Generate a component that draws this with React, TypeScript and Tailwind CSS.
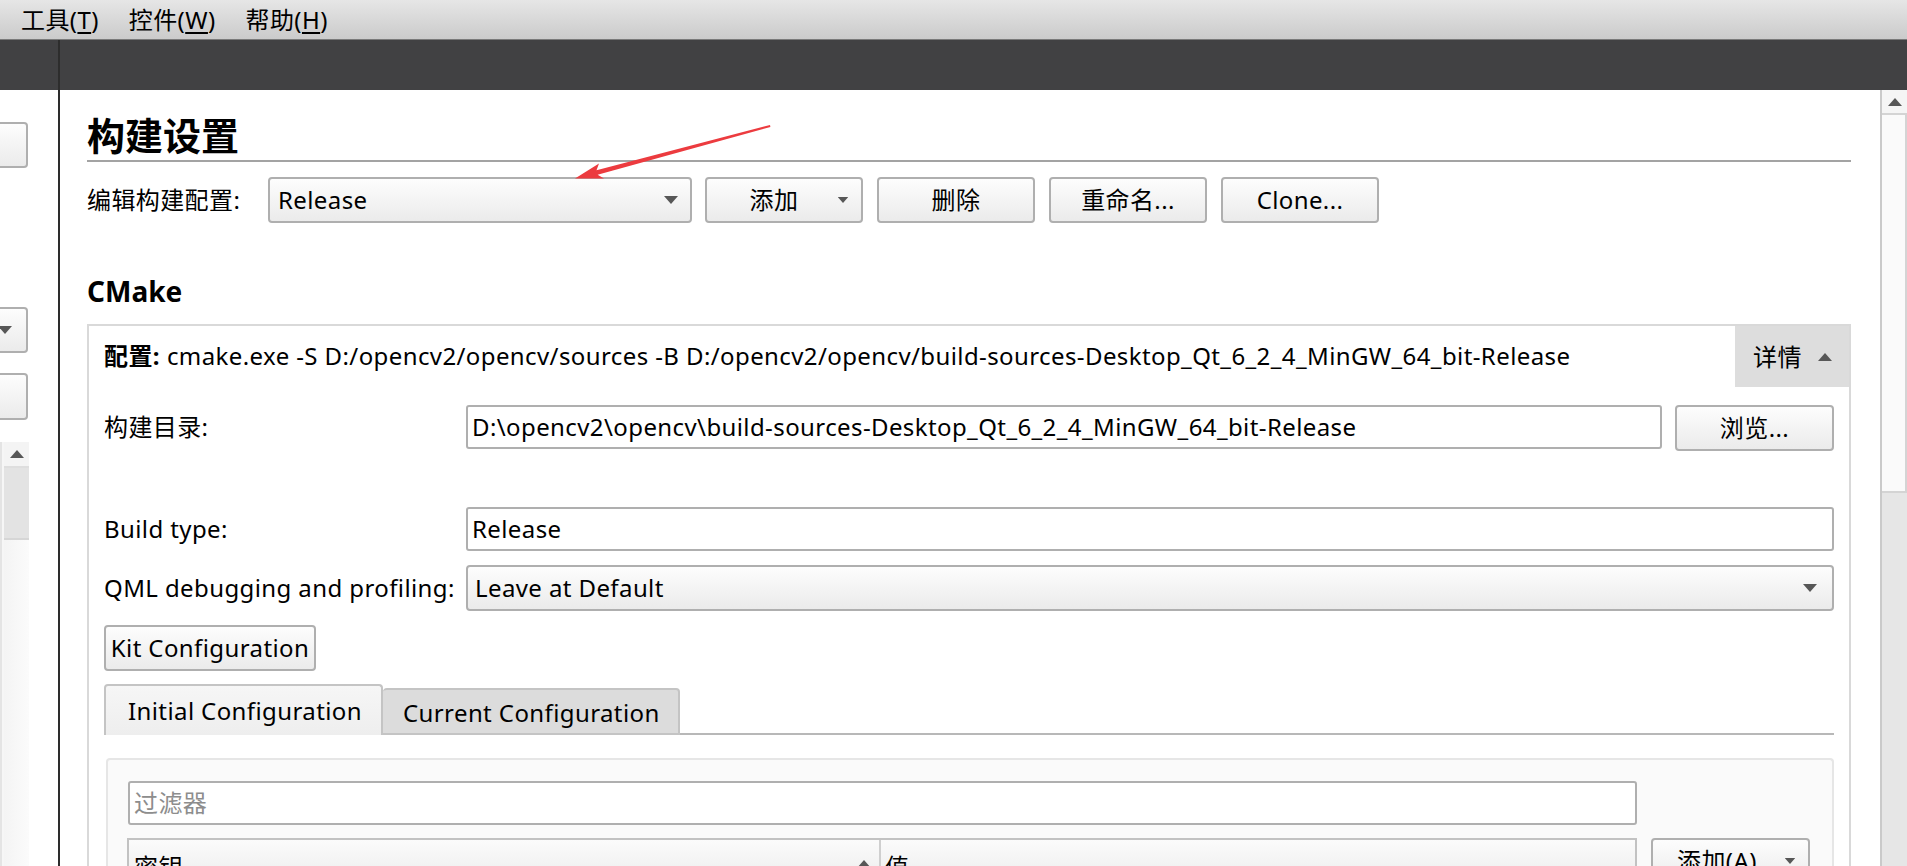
import React from 'react'

const font = "font-['Noto_Sans','Noto_Sans_CJK_SC',sans-serif]"

function Down({ className = '' }: { className?: string }) {
  return (
    <svg width="14" height="8" viewBox="0 0 14 8" className={className}>
      <path d="M0 0H14L7 8Z" fill="#575757" />
    </svg>
  )
}

function Up({ className = '' }: { className?: string }) {
  return (
    <svg width="14" height="8" viewBox="0 0 14 8" className={className}>
      <path d="M0 8H14L7 0Z" fill="#575757" />
    </svg>
  )
}

function Btn({ children, className = '' }: { children: React.ReactNode; className?: string }) {
  return (
    <div
      className={`flex items-center justify-center rounded-[4px] border-2 border-[#afafaf] bg-linear-to-b from-[#fdfdfd] to-[#ebebeb] ${className}`}
    >
      {children}
    </div>
  )
}

function Field({ children, className = '' }: { children?: React.ReactNode; className?: string }) {
  return (
    <div className={`flex items-center rounded-[3px] border-2 border-[#afafaf] bg-white pl-[4px] ${className}`}>
      {children}
    </div>
  )
}

function Menu({ label, k }: { label: string; k: string }) {
  return (
    <span>
      {label}(<span className="underline underline-offset-[3px]">{k}</span>)
    </span>
  )
}

export default function App() {
  return (
    <div className={`${font} relative w-[1907px] h-[866px] overflow-hidden bg-white text-black text-[24px] leading-none tracking-[0.4px]`}>
      {/* menu bar */}
      <div className="h-[40px] flex items-center gap-[30px] pl-[21px] bg-linear-to-b from-[#e6e6e6] to-[#cbcbcb] border-b border-[#7a7a7a]">
        <Menu label="工具" k="T" />
        <Menu label="控件" k="W" />
        <Menu label="帮助" k="H" />
      </div>

      <div className="flex h-[826px]">
        {/* left side panel */}
        <div className="w-[60px] flex flex-col border-r-2 border-[#2d2d2d]">
          <div className="h-[50px] bg-[#414143]" />
          <div className="flex-1 flex flex-col pt-[32px] overflow-hidden">
            <div className="h-[46px] w-[28px] rounded-r-[4px] border-2 border-l-0 border-[#afafaf] bg-linear-to-b from-[#fdfdfd] to-[#ebebeb]" />
            <div className="mt-[139px] h-[46px] w-[28px] flex items-center rounded-r-[4px] border-2 border-l-0 border-[#afafaf] bg-linear-to-b from-[#fdfdfd] to-[#ebebeb]">
              <Down className="-ml-[2px]" />
            </div>
            <div className="mt-[20px] h-[47px] w-[28px] rounded-r-[4px] border-2 border-l-0 border-[#afafaf] bg-linear-to-b from-[#fdfdfd] to-[#ebebeb]" />
            <div className="mt-[22px] flex-1 flex flex-col w-[29px] pl-[2px] border-l-2 border-[#e4e4e4] bg-[#f6f6f6]">
              <div className="h-[26px] flex items-center justify-center border-b-2 border-[#dedede] bg-[#f4f4f4]">
                <Up />
              </div>
              <div className="h-[72px] bg-[#e3e3e3] border-b-2 border-[#d6d6d6]" />
              <div className="flex-1 bg-linear-to-r from-[#f4f4f4] to-[#fbfbfb]" />
            </div>
          </div>
        </div>

        {/* main column */}
        <div className="flex-1 flex flex-col">
          <div className="h-[50px] bg-[#414143]" />
          <div className="flex-1 flex overflow-hidden">
            <div className="flex-1 flex flex-col pl-[27px] pr-[29px] overflow-hidden">
              <div className="pt-[26px]">
                <h1 className="text-[38px] font-bold leading-[38px] tracking-normal pb-[6px] border-b-2 border-[#a3a3a3]">构建设置</h1>
              </div>

              <div className="mt-[15px] flex items-center h-[46px]">
                <div className="w-[181px]">编辑构建配置:</div>
                <div className="w-[424px] h-full flex items-center justify-between pl-[8px] pr-[12px] rounded-[4px] border-2 border-[#afafaf] bg-linear-to-b from-[#fdfdfd] to-[#ebebeb]">
                  <span>Release</span>
                  <Down />
                </div>
                <div className="ml-[13px] flex gap-[14px]">
                  <Btn className="w-[158px] h-[46px] !justify-start">
                    <span className="flex-1 text-center pl-[16px]">添加</span>
                    <span className="w-[36px] flex justify-center">
                      <Down className="scale-75" />
                    </span>
                  </Btn>
                  <Btn className="w-[158px] h-[46px]">删除</Btn>
                  <Btn className="w-[158px] h-[46px]">重命名...</Btn>
                  <Btn className="w-[158px] h-[46px]">Clone...</Btn>
                </div>
              </div>

              <div className="mt-[54px] text-[28px] font-bold leading-[28px] tracking-normal">CMake</div>

              <div className="mt-[19px] flex-1 flex flex-col border-2 border-b-0 border-[#d9d9d9]">
                <div className="h-[61px] flex">
                  <div className="flex-1 flex items-center pl-[15px] pb-[2px] whitespace-nowrap">
                    <b>配置:</b>
                    <span className="ml-[7px]">
                      cmake.exe -S D:/opencv2/opencv/sources -B D:/opencv2/opencv/build-sources-Desktop_Qt_6_2_4_MinGW_64_bit-Release
                    </span>
                  </div>
                  <div className="w-[114px] flex items-center gap-[16px] pl-[18px] bg-[#dddddd]">
                    <span>详情</span>
                    <Up />
                  </div>
                </div>

                <div className="flex-1 flex flex-col px-[15px]">
                  <div className="mt-[18px] flex items-start">
                    <div className="w-[362px] h-[44px] flex items-center">构建目录:</div>
                    <Field className="flex-1 h-[44px] whitespace-nowrap">
                      {'D:\\opencv2\\opencv\\build-sources-Desktop_Qt_6_2_4_MinGW_64_bit-Release'}
                    </Field>
                    <Btn className="ml-[13px] w-[159px] h-[46px]">浏览...</Btn>
                  </div>

                  <div className="mt-[56px] flex items-center h-[44px]">
                    <div className="w-[362px]">Build type:</div>
                    <Field className="flex-1 h-[44px]">Release</Field>
                  </div>

                  <div className="mt-[14px] flex items-center h-[46px]">
                    <div className="w-[362px]">QML debugging and profiling:</div>
                    <div className="flex-1 h-full flex items-center justify-between pl-[7px] pr-[15px] rounded-[4px] border-2 border-[#afafaf] bg-linear-to-b from-[#fdfdfd] to-[#ebebeb]">
                      <span>Leave at Default</span>
                      <Down />
                    </div>
                  </div>

                  <Btn className="mt-[14px] w-[212px] h-[46px]">Kit Configuration</Btn>

                  <div className="mt-[13px] flex items-end h-[51px]">
                    <div className="w-[279px] h-[51px] flex items-center pl-[22px] rounded-t-[4px] border-2 border-b-0 border-[#c4c4c4] bg-linear-to-b from-[#f6f6f6] to-[#eeeeee]">
                      Initial Configuration
                    </div>
                    <div className="w-[297px] h-[47px] flex items-center pl-[20px] pt-[3px] rounded-t-[4px] border-2 border-l-0 border-[#c4c4c4] bg-[#dcdcdc]">
                      Current Configuration
                    </div>
                    <div className="flex-1 h-[2px] bg-[#b8b8b8]" />
                  </div>

                  <div className="mt-[23px] ml-[2px] flex-1 rounded-[4px] border-2 border-b-0 border-[#e6e6e6] bg-[#fafafa] pl-[20px] pt-[21px] pr-[22px]">
                    <div className="grid grid-cols-[1fr_159px] gap-x-[14px] gap-y-[13px]">
                      <Field className="h-[44px] text-[#8d8d8d]">过滤器</Field>
                      <div />
                      <div className="-ml-[1px] h-[46px] flex border-2 border-b-0 border-[#c2c2c2] bg-linear-to-b from-[#fbfbfb] to-[#ececec]">
                        <div className="w-[752px] flex items-center justify-between pl-[5px] pr-[8px] pt-[10px] border-r-2 border-[#cfcfcf]">
                          <span>密钥</span>
                          <Up className="-mt-[6px]" />
                        </div>
                        <div className="flex-1 flex items-center pl-[4px] pt-[10px]">值</div>
                      </div>
                      <Btn className="h-[46px] !justify-start">
                        <span className="flex-1 pl-[24px]">添加(A)</span>
                        <span className="w-[36px] flex justify-center">
                          <Down className="scale-75" />
                        </span>
                      </Btn>
                    </div>
                  </div>
                </div>
              </div>
            </div>

            {/* vertical scrollbar */}
            <div className="w-[27px] flex flex-col border-l-2 border-[#cacaca] bg-[#e6e6e6]">
              <div className="h-[25px] flex items-center justify-center bg-[#f5f5f5] border-b-2 border-[#d4d4d4]">
                <Up />
              </div>
              <div className="h-[378px] bg-[#fafafa] border-r-2 border-b-2 border-[#d4d4d4]" />
              <div className="flex-1" />
            </div>
          </div>
        </div>
      </div>

      {/* red annotation arrow */}
      <svg className="absolute left-0 top-0 pointer-events-none" width="1907" height="866">
        <polygon
          points="575,178.5 599,163.5 596.5,170.3 770,125 770.4,127 597.6,174.8 604,178.6"
          fill="#ec3b3f"
        />
      </svg>
    </div>
  )
}
